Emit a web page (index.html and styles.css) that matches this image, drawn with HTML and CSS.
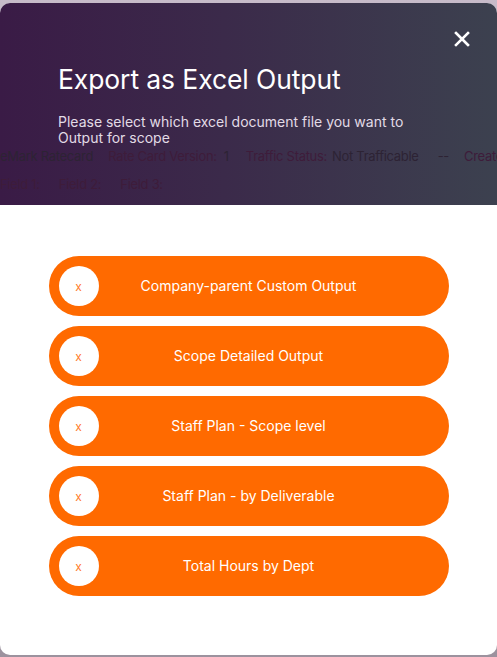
FILE: index.html
```html
<!DOCTYPE html>
<html>
<head>
<meta charset="utf-8">
<link rel="stylesheet" href="styles.css">
</head>
<body>
<div class="modal">
  <div class="header">
    <div class="ghost">
      <div class="ghost-row row1">
        <span class="g-val">eMark Ratecard</span>
        <span class="g-lab gap15">Rate Card Version:</span><span class="g-val gap7">1</span>
        <span class="g-lab gap17">Traffic Status:</span><span class="g-val gap5">Not Trafficable</span>
        <span class="g-val gap19">--</span>
        <span class="g-lab gap15">Create</span>
      </div>
      <div class="ghost-row row2">
        <span class="g-lab">Field 1:</span>
        <span class="g-lab gap19">Field 2:</span>
        <span class="g-lab gap19">Field 3:</span>
      </div>
    </div>
    <button class="close" aria-label="Close">
      <svg width="16" height="16" viewBox="0 0 16 16"><path d="M2 2 L14 14 M14 2 L2 14" stroke="#fff" stroke-width="2.6" stroke-linecap="square"/></svg>
    </button>
    <h1 class="title">Export as Excel Output</h1>
    <p class="subtitle">Please select which excel document file you want to Output for scope</p>
  </div>
  <div class="body">
    <div class="option"><span class="dot">x</span><span class="label">Company-parent Custom Output</span></div>
    <div class="option"><span class="dot">x</span><span class="label">Scope Detailed Output</span></div>
    <div class="option"><span class="dot">x</span><span class="label">Staff Plan - Scope level</span></div>
    <div class="option"><span class="dot">x</span><span class="label">Staff Plan - by Deliverable</span></div>
    <div class="option"><span class="dot">x</span><span class="label">Total Hours by Dept</span></div>
  </div>
</div>
</body>
</html>
```
FILE: styles.css
```css
html, body {
  margin: 0;
  padding: 0;
}
body {
  width: 497px;
  height: 657px;
  overflow: hidden;
  background: linear-gradient(180deg, #c7bbc9 0%, #9c929e 100%);
  font-family: "Inter", "Roboto", sans-serif;
}
.modal {
  margin-top: 3px;
  height: 652px;
  border-radius: 10px;
  overflow: hidden;
  background: #fff;
  display: flex;
  flex-direction: column;
}
.header {
  position: relative;
  height: 202px;
  box-sizing: border-box;
  padding: 60px 40px 0 58px;
  background: linear-gradient(90deg, #3a1b46 0%, #3b2a4a 45%, #3c414f 100%);
  color: #fff;
  overflow: hidden;
}
.ghost {
  position: absolute;
  left: 0;
  top: 141px;
  white-space: nowrap;
  font-size: 13px;
  letter-spacing: -0.3px;
}
.ghost-row {
  display: flex;
}
.row1 { height: 24px; align-items: center; }
.row2 { height: 32px; align-items: center; }
.gap5 { margin-left: 5px; }
.gap7 { margin-left: 7px; }
.gap15 { margin-left: 15px; }
.gap17 { margin-left: 17px; }
.gap19 { margin-left: 19px; }
.g-val { color: #2d2334; }
.g-lab { color: #3e1c3a; }
.close {
  position: absolute;
  top: 25px;
  right: 24px;
  width: 22px;
  height: 22px;
  padding: 0;
  border: 0;
  background: transparent;
  display: flex;
  align-items: center;
  justify-content: center;
}
.title {
  position: relative;
  margin: 0;
  font-weight: 400;
  font-size: 26.5px;
  line-height: 32px;
  letter-spacing: -0.1px;
  color: #fff;
}
.subtitle {
  position: relative;
  max-width: 350px;
  margin: 19px 0 0;
  font-size: 14px;
  line-height: 16px;
  color: #e2dbe6;
}
.body {
  flex: 1;
  display: flex;
  flex-direction: column;
  align-items: center;
  gap: 10px;
  padding-top: 51px;
}
.option {
  position: relative;
  width: 400px;
  height: 60px;
  border-radius: 30px;
  background: #ff6a00;
  display: flex;
  align-items: center;
  justify-content: center;
}
.dot {
  position: absolute;
  left: 10px;
  top: 10px;
  width: 40px;
  height: 40px;
  border-radius: 50%;
  background: #fff;
  color: #ff7a2a;
  font-size: 12px;
  display: flex;
  align-items: center;
  justify-content: center;
}
.label {
  color: #fff;
  font-size: 14px;
  margin-top: -2px;
}
```
